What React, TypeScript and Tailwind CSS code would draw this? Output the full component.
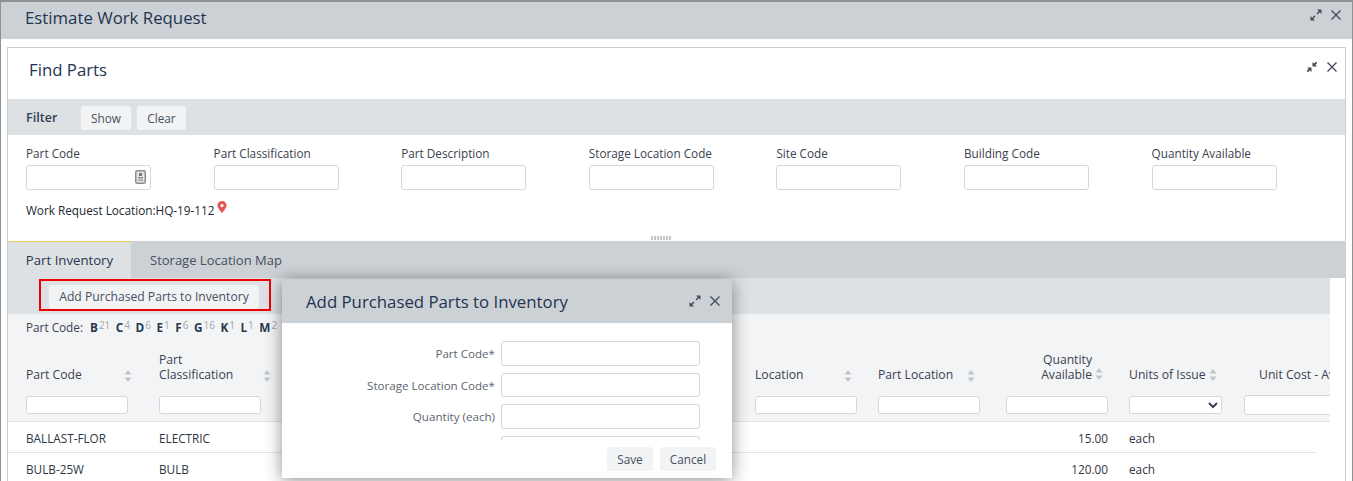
import React from 'react';

const ExpandIcon = () => (
    <svg width="12" height="12" viewBox="0 0 12 12" fill="#454d58">
        <path d="M7 0.5h4.5V5L9.8 3.3 7.6 5.5 6.5 4.4 8.7 2.2z"/>
        <path d="M5 11.5H0.5V7l1.7 1.7 2.2-2.2 1.1 1.1-2.2 2.2z"/>
    </svg>
);

const CompressIcon = () => (
    <svg width="12" height="12" viewBox="0 0 12 12" fill="#454d58">
        <path d="M11 5.5H6.5V1l1.6 1.6L10 0.7l1.3 1.3-1.9 1.9z"/>
        <path d="M1 6.5h4.5V11L3.9 9.4 2 11.3 0.7 10l1.9-1.9z"/>
    </svg>
);

const CloseIcon = () => (
    <svg width="10" height="10" viewBox="0 0 10 10" stroke="#454d58" strokeWidth="1.4" fill="none">
        <path d="M0.5 0.5l9 9M9.5 0.5l-9 9"/>
    </svg>
);

const SortIcon = () => (
    <svg width="8" height="12" viewBox="0 0 8 12" fill="#c3c7cb" className="shrink-0">
        <path d="M4 0l3.5 4.5h-7z"/>
        <path d="M4 12l3.5-4.5h-7z"/>
    </svg>
);

const PinIcon = () => (
    <svg width="10" height="12" viewBox="0 0 10 12" className="inline-block align-[2px] ml-[3px]">
        <path fillRule="evenodd" fill="#e0584f" d="M5 0a4.6 4.6 0 0 1 4.6 4.6C9.6 7.4 5 12 5 12S0.4 7.4 0.4 4.6A4.6 4.6 0 0 1 5 0zm0 3a1.6 1.6 0 1 0 0 3.2A1.6 1.6 0 0 0 5 3z"/>
    </svg>
);

const LookupIcon = () => (
    <svg width="11" height="14" viewBox="0 0 11 14" className="absolute right-[5px] top-[5px]">
        <rect x="0.75" y="0.75" width="9.5" height="12.5" rx="1.5" fill="#e3e4e5" stroke="#8b8d8f" strokeWidth="1.5"/>
        <rect x="4" y="3" width="3" height="3" fill="#77797b"/>
        <rect x="3" y="7" width="5" height="1.5" fill="#8b8d8f"/>
        <rect x="3" y="9.5" width="5" height="1.5" fill="#a5a7a9"/>
    </svg>
);

const textInput = 'block bg-white border border-[#d5d8db] rounded-[3px]';
const columnInput = 'block mt-[14px] mb-[7px] h-[18px] bg-white border border-[#d5d8db] rounded-[3px]';
const softButton = 'h-[24px] rounded-[3px] bg-[#f2f3f5] pt-[1px] text-[#46505e]';

const filterFields = ['Part Code', 'Part Classification', 'Part Description', 'Storage Location Code', 'Site Code', 'Building Code', 'Quantity Available'];
const letters: [string, number][] = [['B', 21], ['C', 4], ['D', 6], ['E', 1], ['F', 6], ['G', 16], ['K', 1], ['L', 1], ['M', 2]];
const rows = [
    { code: 'BALLAST-FLOR', cls: 'ELECTRIC', qty: '15.00' },
    { code: 'BULB-25W', cls: 'BULB', qty: '120.00' },
];
const tableCols = 'grid grid-cols-[133px_133px_463px_123px_128px_123px_115px_120px]';

const HeaderCell = ({ label, width }: { label: React.ReactNode; width: string }) => (
    <div className="flex flex-col justify-end">
        <div className={`flex items-end justify-between leading-[15px] text-[12.2px] ${width}`}>
            <span>{label}</span>
            <SortIcon />
        </div>
        <input className={`${columnInput} w-[102px]`} />
    </div>
);

const App = () => {
    return (
        <div className="relative h-[481px] w-[1353px] overflow-hidden bg-white border-t-2 border-l border-r border-[#8f9193] text-[11.75px] text-[#3a4250] font-['Open_Sans',sans-serif]">
            <div className="flex h-[37px] items-start justify-between bg-[#ccd1d5] pl-[24px] pr-[11px]">
                <h1 className="text-[16.8px] leading-[31px] font-medium text-[#1f3450]">Estimate Work Request</h1>
                <div className="flex items-center gap-[9px] pt-[7px]"><ExpandIcon /><CloseIcon /></div>
            </div>

            <div className="ml-[6px] mr-[6px] mt-[8px] border border-[#ccd0d3] h-[440px]">
                <div className="flex h-[51px] items-start justify-between pl-[21px] pr-[8px]">
                    <h2 className="text-[16.8px] leading-[44px] font-medium text-[#1f3450]">Find Parts</h2>
                    <div className="flex items-center gap-[9px] pt-[13px]"><CompressIcon /><CloseIcon /></div>
                </div>

                <div className="flex h-[36px] items-center bg-[#dee1e4] pl-[18px] pt-[2px]">
                    <span className="w-[55px] pt-[1px] text-[12.6px] font-semibold text-[#2f3f55]">Filter</span>
                    <div className="flex gap-[6px]">
                        <button className={`${softButton} w-[50px] text-[11.75px]`}>Show</button>
                        <button className={`${softButton} w-[49px] text-[11.75px]`}>Clear</button>
                    </div>
                </div>

                <div className="relative h-[106px] pl-[18px] pt-[10px]">
                    <div className="grid grid-cols-[repeat(7,187.6px)]">
                        {filterFields.map((field, i) => (
                            <div key={field}>
                                <label className="block leading-[17px] mb-[3px]">{field}</label>
                                <div className="relative w-[125px]">
                                    <input className={`${textInput} h-[25px] w-[125px]`} />
                                    {i === 0 && <LookupIcon />}
                                </div>
                            </div>
                        ))}
                    </div>
                    <p className="mt-[11px] leading-[17px] text-[#222831]">Work Request Location:HQ-19-112<PinIcon /></p>
                    <div className="absolute bottom-[1px] left-[643px] h-[4px] w-[20px] bg-[repeating-linear-gradient(90deg,#c3c6c9_0,#c3c6c9_2px,transparent_2px,transparent_3px)]" />
                </div>

                <div className="flex h-[37px] bg-[#ccd1d5] text-[13px] font-medium">
                    <div className="flex w-[123px] items-center justify-center border-t border-[#ecc95f] bg-[#dee1e4] pt-[1px] text-[13.2px] text-[#27384f]">Part Inventory</div>
                    <div className="flex items-center pl-[19px] pt-[2px] text-[#46505e]">Storage Location Map</div>
                </div>

                <div className="mr-[15px] overflow-hidden">
                    <div className="relative h-[36px] bg-[#dee1e4] pl-[41px] pt-[7px]">
                        <button className={`${softButton} w-[210px] text-[12.15px]`}>Add Purchased Parts to Inventory</button>
                        <div className="absolute left-[31px] top-[1px] h-[32px] w-[232px] border-2 border-[#f00000]" />
                    </div>

                    <div className="h-[108px] bg-[#f3f4f6] border-b border-[#e2e4e6] pl-[18px]">
                        <div className="flex h-[26px] items-center pt-[1px] font-medium">
                            <span className="mr-[7px]">Part Code:</span>
                            {letters.map(([letter, count]) => (
                                <span key={letter} className="mr-[5.5px] flex items-start">
                                    <b className="font-bold text-[#27384f]">{letter}</b>
                                    <span className="ml-[1px] text-[10px] leading-[13px] font-normal text-[#a2a6ab]">{count}</span>
                                </span>
                            ))}
                        </div>
                        <div className={`${tableCols} h-[81px]`}>
                            <HeaderCell label="Part Code" width="w-[106px]" />
                            <HeaderCell label={<>Part<br />Classification</>} width="w-[112px]" />
                            <div />
                            <HeaderCell label="Location" width="w-[97px]" />
                            <HeaderCell label="Part Location" width="w-[97px]" />
                            <div className="flex flex-col justify-end items-end w-[102px]">
                                <div className="mr-[5px] flex items-end gap-[3px] leading-[15px] text-[12.2px] text-right">
                                    <span>Quantity<br />Available</span>
                                    <span className="pb-[2px]"><SortIcon /></span>
                                </div>
                                <input className={`${columnInput} w-[102px]`} />
                            </div>
                            <div className="flex flex-col justify-end">
                                <div className="flex items-center gap-[3px] leading-[15px] text-[12.2px]"><span>Units of Issue</span><SortIcon /></div>
                                <select className={`${columnInput} w-[93px]`} />
                            </div>
                            <div className="flex flex-col justify-end">
                                <div className="leading-[15px] text-[12.2px] whitespace-nowrap pl-[15px]">Unit Cost - Average</div>
                                <input className="block mt-[13px] mb-[6px] h-[20px] w-[102px] bg-white border border-[#d5d8db] rounded-[3px]" />
                            </div>
                        </div>
                    </div>

                    {rows.map((row) => (
                        <div key={row.code} className={`${tableCols} h-[31px] items-center pl-[18px] pt-[4px] border-b border-[#e2e4e6] mr-[14px] text-[#2e3642]`}>
                            <span>{row.code}</span>
                            <span>{row.cls}</span>
                            <span />
                            <span />
                            <span />
                            <span className="w-[102px] text-right">{row.qty}</span>
                            <span>each</span>
                        </div>
                    ))}
                </div>
            </div>

            <div className="absolute left-[281px] top-[277px] flex h-[199px] w-[450px] flex-col bg-white shadow-[0_2px_16px_rgba(0,0,0,0.45)]">
                <div className="flex h-[44px] items-center justify-between bg-[#ccd1d5] pl-[24px] pr-[12px] pt-[1px]">
                    <h3 className="text-[16.8px] font-medium text-[#1f3450]">Add Purchased Parts to Inventory</h3>
                    <div className="flex items-center gap-[9px] pb-[1px]"><ExpandIcon /><CloseIcon /></div>
                </div>
                <div className="h-[117px] overflow-hidden pt-[18px] text-[11.6px] text-[#5c6570]">
                    {['Part Code*', 'Storage Location Code*', 'Quantity (each)', ''].map((label) => (
                        <div key={label} className="mb-[7px] flex items-center">
                            <label className="w-[219px] pr-[6px] pt-[1px] text-right">{label}</label>
                            <input className={`${textInput} h-[24.67px] w-[199px]`} />
                        </div>
                    ))}
                </div>
                <div className="flex justify-end gap-[7px] pr-[16px] pt-[7px]">
                    <button className={`${softButton} w-[46px] text-[11.75px]`}>Save</button>
                    <button className={`${softButton} w-[56px] text-[11.75px]`}>Cancel</button>
                </div>
            </div>
        </div>
    );
};

export default App;
